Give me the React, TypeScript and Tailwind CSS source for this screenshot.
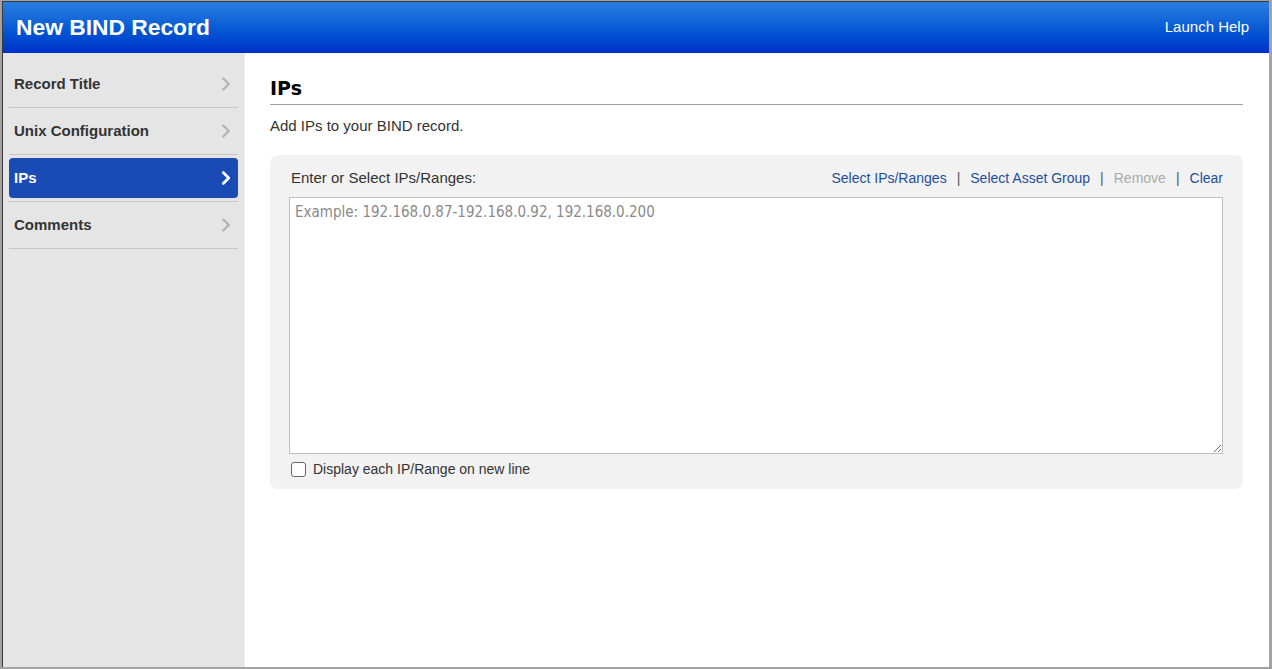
import { ChevronRight } from "lucide-react";

const navItems = [
    { label: "Record Title", active: false },
    { label: "Unix Configuration", active: false },
    { label: "IPs", active: true },
    { label: "Comments", active: false },
];

function NavItem({ label, active }: { label: string; active: boolean }) {
    return (
        <div className="h-[47px] border-b border-[#c6c6c6] py-[3px]">
            <div
                className={`flex h-full items-center justify-between rounded-[4px] pl-[5px] pr-px text-[15px] font-bold ${
                    active ? "bg-[#1a4bb4] text-white" : "text-[#333]"
                }`}
            >
                <span>{label}</span>
                <ChevronRight
                    size={22}
                    strokeWidth={active ? 3 : 2.5}
                    className={active ? "text-white" : "text-[#b3b3b3]"}
                />
            </div>
        </div>
    );
}

export default function App() {
    return (
        <div
            className="flex h-[669px] flex-col bg-[#a3a3a3] pb-[2px] pl-[2px] pr-[3px] pt-px"
            style={{ fontFamily: '"Liberation Sans", Arial, sans-serif' }}
        >
            <div className="flex flex-1 flex-col border-l border-t border-[#3a3a3a] bg-white">
                <header className="flex h-[51px] items-center justify-between bg-gradient-to-b from-[#2a7fe0] to-[#0030c8] pl-[13px] pr-[20px]">
                    <h1 className="text-[22.8px] font-bold text-white">New BIND Record</h1>
                    <span className="text-[15px] text-white">Launch Help</span>
                </header>

                <div className="flex flex-1">
                    <aside className="w-[242px] border-r border-[#f0f0f0] bg-[#e5e5e5] px-[6px] pt-[8px]">
                        {navItems.map((item) => (
                            <NavItem key={item.label} label={item.label} active={item.active} />
                        ))}
                    </aside>

                    <main className="flex-1 pl-[25px] pr-[26px] pt-[23px]">
                        <h2
                            className="border-b border-[#a0a0a0] pb-[4px] text-[19px] font-bold leading-[24px] text-black"
                            style={{ fontFamily: '"DejaVu Sans", Verdana, sans-serif' }}
                        >
                            IPs
                        </h2>
                        <p className="mt-[11px] text-[15px] leading-[20px] text-[#333]">
                            Add IPs to your BIND record.
                        </p>

                        <section className="mt-[19px] rounded-[8px] bg-[#f2f2f2] pb-[10px] pl-[19px] pr-[20px] pt-[13px]">
                            <div className="flex items-center justify-between pl-[2px] leading-[20px]">
                                <span className="text-[15px] text-[#333]">Enter or Select IPs/Ranges:</span>
                                <div className="flex items-center text-[14px]">
                                    <a className="text-[#1f4e9c]">Select IPs/Ranges</a>
                                    <span className="mx-[10px] text-[#555]">|</span>
                                    <a className="text-[#1f4e9c]">Select Asset Group</a>
                                    <span className="mx-[10px] text-[#555]">|</span>
                                    <span className="text-[#aaa]">Remove</span>
                                    <span className="mx-[10px] text-[#555]">|</span>
                                    <a className="text-[#1f4e9c]">Clear</a>
                                </div>
                            </div>

                            <textarea
                                className="mt-[9px] block h-[257px] w-full border border-[#c0c0c0] bg-white px-[5px] pt-[3px] text-[15px] text-[#333] outline-none placeholder:text-[#8a8a8a]"
                                style={{ fontFamily: '"DejaVu Sans", Tahoma, sans-serif', fontStretch: "condensed" }}
                                placeholder="Example: 192.168.0.87-192.168.0.92, 192.168.0.200"
                            />

                            <label className="mt-[5px] flex items-center gap-[7px] pl-[2px] text-[14px] leading-[20px] text-[#333]">
                                <span className="h-[15px] w-[15px] rounded-[3px] border border-[#666] bg-white" />
                                Display each IP/Range on new line
                            </label>
                        </section>
                    </main>
                </div>
            </div>
        </div>
    );
}
